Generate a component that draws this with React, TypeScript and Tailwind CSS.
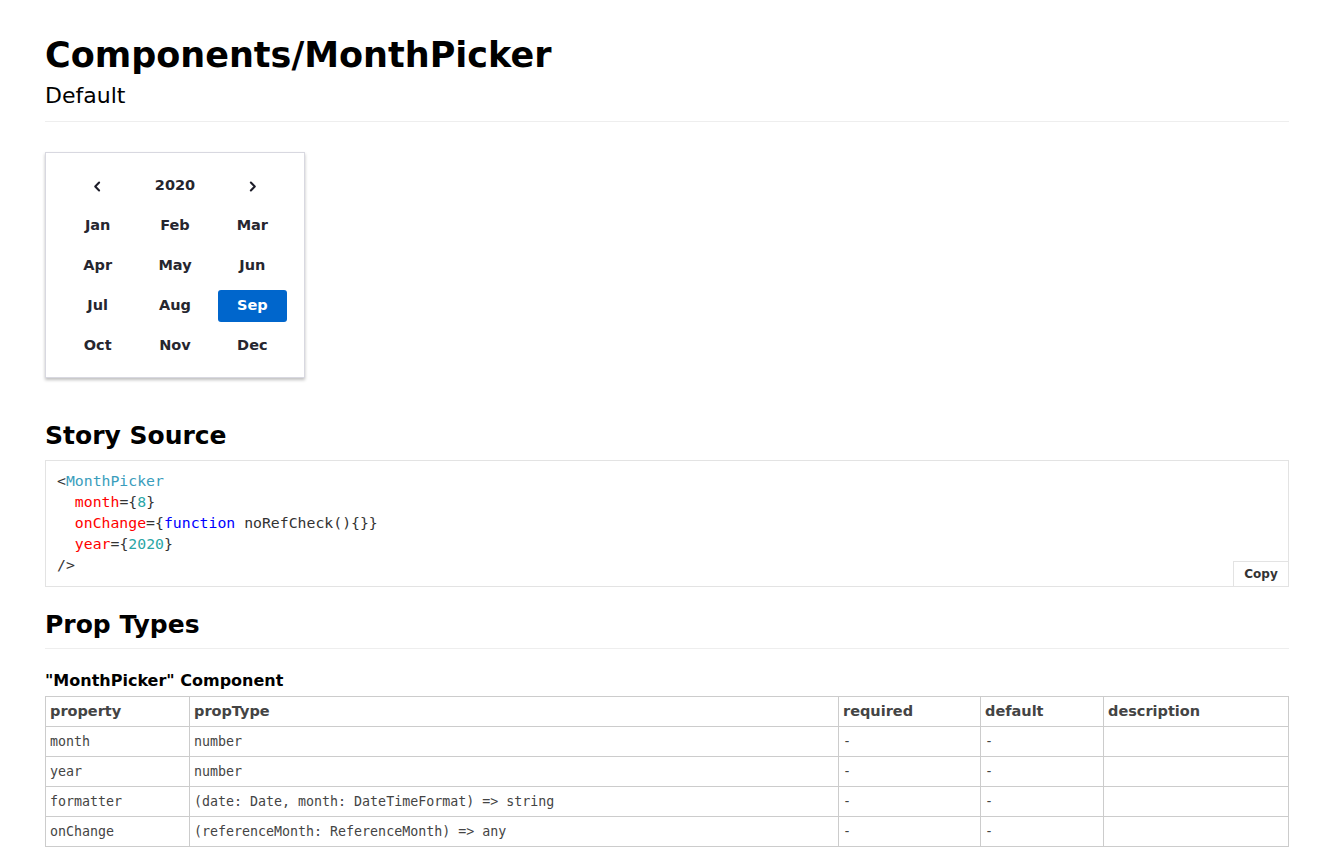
import React from "react";

const months = ["Jan","Feb","Mar","Apr","May","Jun","Jul","Aug","Sep","Oct","Nov","Dec"];

const rows = [
  ["month", "number"],
  ["year", "number"],
  ["formatter", "(date: Date, month: DateTimeFormat) => string"],
  ["onChange", "(referenceMonth: ReferenceMonth) => any"],
];

function Chevron({ dir }: { dir: "l" | "r" }) {
  return (
    <svg width="13" height="13" viewBox="0 0 12 12" fill="none" stroke="#1e1e2a" strokeWidth="1.9" strokeLinecap="round" strokeLinejoin="round">
      {dir === "l" ? <path d="M7.5 2.3 L3.9 6 L7.5 9.7" /> : <path d="M4.5 2.3 L8.1 6 L4.5 9.7" />}
    </svg>
  );
}

export default function App() {
  return (
    <div className="bg-white min-h-screen text-black" style={{ fontFamily: '"DejaVu Sans", sans-serif' }}>
      <div className="px-[45px] pt-[33px]">
        <div className="border-b border-[#eeeeee] pb-[8px]">
          <h1 className="text-[35px] font-bold leading-[44px]">Components/MonthPicker</h1>
          <h2 className="text-[22px] leading-[34px] mt-[2px]">Default</h2>
        </div>

        <div className="mt-[30px] w-[260px] h-[226px] bg-white border border-[#d8d8e0] shadow-[0_2px_3px_rgba(0,0,0,0.25)] px-[17px] pt-[17px]">
          <div className="grid grid-cols-3 gap-x-[8px] gap-y-[8px] text-[14.5px] font-bold text-[#26262f]">
            <div className="h-[32px] flex items-center justify-center"><Chevron dir="l" /></div>
            <div className="h-[32px] flex items-center justify-center">2020</div>
            <div className="h-[32px] flex items-center justify-center"><Chevron dir="r" /></div>
            {months.map((m) => (
              <div
                key={m}
                className={
                  m === "Sep"
                    ? "h-[32px] flex items-center justify-center rounded-[3px] bg-[#0066cc] text-white"
                    : "h-[32px] flex items-center justify-center"
                }
              >
                {m}
              </div>
            ))}
          </div>
        </div>

        <h2 className="mt-[40px] text-[25px] font-bold leading-[36px]">Story Source</h2>
        <div className="relative mt-[6px] border border-[#e3e3e3] h-[127px] px-[11px] pt-[9px] text-[14.8px] leading-[21px] text-[#333] whitespace-pre" style={{ fontFamily: '"DejaVu Sans Mono", monospace' }}>
          <div>&lt;<span className="text-[#3a9dbc]">MonthPicker</span></div>
          <div>{"  "}<span className="text-[#ff0000]">month</span>={"{"}<span className="text-[#2aa6a6]">8</span>{"}"}</div>
          <div>{"  "}<span className="text-[#ff0000]">onChange</span>={"{"}<span className="text-[#0000ff]">function</span> noRefCheck(){"{}}"}</div>
          <div>{"  "}<span className="text-[#ff0000]">year</span>={"{"}<span className="text-[#2aa6a6]">2020</span>{"}"}</div>
          <div>/&gt;</div>
          <div className="absolute right-[-1px] bottom-[-1px] w-[56px] h-[26px] border border-[#e3e3e3] bg-white flex items-center justify-center text-[12px] font-bold text-[#333]" style={{ fontFamily: '"DejaVu Sans", sans-serif' }}>
            Copy
          </div>
        </div>

        <div className="mt-[23px] border-b border-[#eeeeee] pb-[8px]">
          <h2 className="text-[25px] font-bold leading-[30px]">Prop Types</h2>
        </div>
        <h3 className="mt-[21px] text-[16px] font-bold leading-[22px]">"MonthPicker" Component</h3>
        <table className="mt-[4px] w-[1244px] border-collapse text-[#444]">
          <thead>
            <tr className="h-[30px] text-[14.5px] font-bold text-left">
              <th className="border border-[#cccccc] px-[4px] w-[144px] font-bold">property</th>
              <th className="border border-[#cccccc] px-[4px] w-[649px] font-bold">propType</th>
              <th className="border border-[#cccccc] px-[4px] w-[142px] font-bold">required</th>
              <th className="border border-[#cccccc] px-[4px] w-[123px] font-bold">default</th>
              <th className="border border-[#cccccc] px-[4px] font-bold">description</th>
            </tr>
          </thead>
          <tbody className="text-[13.3px]" style={{ fontFamily: '"DejaVu Sans Mono", monospace' }}>
            {rows.map(([p, t]) => (
              <tr key={p} className="h-[30px]">
                <td className="border border-[#cccccc] px-[4px]">{p}</td>
                <td className="border border-[#cccccc] px-[4px]">{t}</td>
                <td className="border border-[#cccccc] px-[4px]">-</td>
                <td className="border border-[#cccccc] px-[4px]">-</td>
                <td className="border border-[#cccccc] px-[4px]"></td>
              </tr>
            ))}
          </tbody>
        </table>
      </div>
    </div>
  );
}
